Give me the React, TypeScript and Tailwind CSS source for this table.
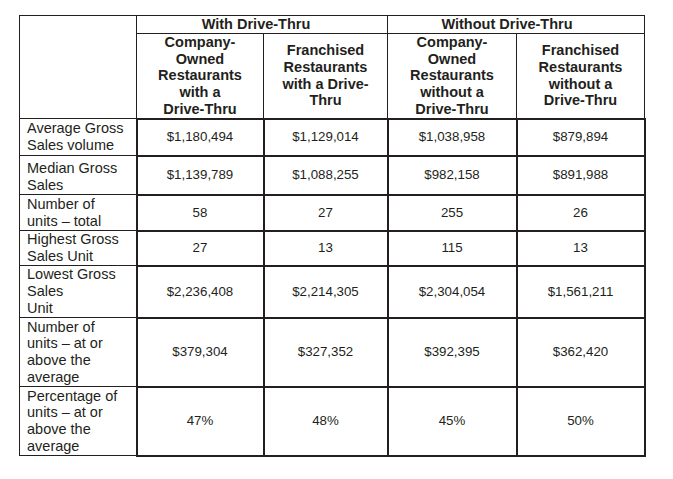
import React from "react";

const rows: { label: React.ReactNode; h: string; vals: string[] }[] = [
  { label: <>Average Gross<br />Sales volume</>, h: "h-[37px]", vals: ["$1,180,494", "$1,129,014", "$1,038,958", "$879,894"] },
  { label: <>Median Gross<br />Sales</>, h: "h-[39px]", vals: ["$1,139,789", "$1,088,255", "$982,158", "$891,988"] },
  { label: <>Number of<br />units – total</>, h: "h-[36px]", vals: ["58", "27", "255", "26"] },
  { label: <>Highest Gross<br />Sales Unit</>, h: "h-[35px]", vals: ["27", "13", "115", "13"] },
  { label: <>Lowest Gross<br />Sales<br />Unit</>, h: "h-[52px]", vals: ["$2,236,408", "$2,214,305", "$2,304,054", "$1,561,211"] },
  { label: <>Number of<br />units – at or<br />above the<br />average</>, h: "h-[69px]", vals: ["$379,304", "$327,352", "$392,395", "$362,420"] },
  { label: <>Percentage of<br />units – at or<br />above the<br />average</>, h: "h-[69px]", vals: ["47%", "48%", "45%", "50%"] },
];

const thin = "border border-[#231f20]";
const thick = "border-2 border-[#231f20]";

export default function App() {
  return (
    <div className="w-[673px] h-[479px] bg-white pt-[15px] pl-[19px] text-[#231f20]" style={{ fontFamily: '"Liberation Sans", Arial, sans-serif' }}>
      <table className="border-collapse table-fixed w-[625px]">
        <colgroup>
          <col className="w-[117px]" />
          <col className="w-[127px]" />
          <col className="w-[124px]" />
          <col className="w-[129px]" />
          <col className="w-[128px]" />
        </colgroup>
        <thead>
          <tr className="h-[18px]">
            <th rowSpan={2} className={thin}></th>
            <th colSpan={2} className={`${thin} p-0 pr-[12px] text-[14.5px] leading-[16.7px] font-bold text-center`}>With Drive-Thru</th>
            <th colSpan={2} className={`${thin} p-0 pr-[18px] text-[14.5px] leading-[16.7px] font-bold text-center`}>Without Drive-Thru</th>
          </tr>
          <tr className="h-[84px]">
            <th className={`${thin} p-0 text-[14.5px] leading-[16.7px] font-bold text-center align-middle`}>Company-<br />Owned<br />Restaurants<br />with a<br />Drive-Thru</th>
            <th className={`${thin} p-0 text-[14.5px] leading-[16.7px] font-bold text-center align-middle`}>Franchised<br />Restaurants<br />with a Drive-<br />Thru</th>
            <th className={`${thin} p-0 text-[14.5px] leading-[16.7px] font-bold text-center align-middle`}>Company-<br />Owned<br />Restaurants<br />without a<br />Drive-Thru</th>
            <th className={`${thin} p-0 text-[14.5px] leading-[16.7px] font-bold text-center align-middle`}>Franchised<br />Restaurants<br />without a<br />Drive-Thru</th>
          </tr>
        </thead>
        <tbody>
          {rows.map((r, i) => (
            <tr key={i} className={r.h}>
              <td className={`${thin} p-0 pl-[7px] text-[14.5px] leading-[16.7px] align-middle ${i === 1 ? "pt-[4px]" : ""}`}>{r.label}</td>
              {r.vals.map((v, j) => (
                <td key={j} className={`${thick} p-0 text-[13.3px] text-center align-middle`}>{v}</td>
              ))}
            </tr>
          ))}
        </tbody>
      </table>
    </div>
  );
}
